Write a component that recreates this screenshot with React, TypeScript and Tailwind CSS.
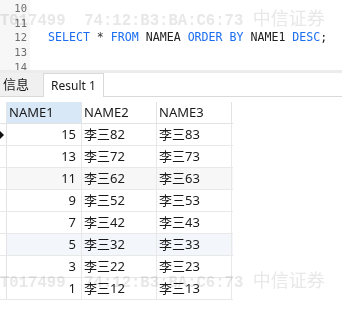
import React from 'react';

const rows = [
  { n: 15, a: '李三82', b: '李三83', bg: 'bg-white', mark: true },
  { n: 13, a: '李三72', b: '李三73', bg: 'bg-white' },
  { n: 11, a: '李三62', b: '李三63', bg: 'bg-[#f7f7f7]' },
  { n: 9, a: '李三52', b: '李三53', bg: 'bg-white' },
  { n: 7, a: '李三42', b: '李三43', bg: 'bg-white' },
  { n: 5, a: '李三32', b: '李三33', bg: 'bg-[#f3f7fc]' },
  { n: 3, a: '李三22', b: '李三23', bg: 'bg-white' },
  { n: 1, a: '李三12', b: '李三13', bg: 'bg-white' },
];

const Watermark: React.FC<{ top: string }> = ({ top }) => (
  <div
    className={`pointer-events-none absolute left-0 ${top} flex items-baseline whitespace-pre text-[#e8e8e8] mix-blend-multiply`}
  >
    <span className="font-['Liberation_Mono',monospace] text-[15.6px] font-bold">T017499  74:12:B3:BA:C6:73 </span>
    <span className="font-['Noto_Sans_CJK_SC',sans-serif] text-[18px]">中信证券</span>
  </div>
);

const App: React.FC = () => {
  return (
    <div className="relative w-[342px] h-[327px] overflow-hidden bg-white font-['Noto_Sans','Noto_Sans_CJK_SC',sans-serif] text-[#1a1a1a]">
      {/* editor */}
      <div className="flex h-[70px] overflow-hidden">
        <div className="w-[30px] bg-[#f7f7f7] pt-[1px] pr-[3px] text-right font-['DejaVu_Sans_Mono',monospace] text-[10.5px] leading-[14.7px] text-[#6e6e6e]">
          <div>10</div>
          <div>11</div>
          <div>12</div>
          <div>13</div>
          <div>14</div>
        </div>
        <div className="pt-[1px] pl-[18px] font-['DejaVu_Sans_Mono',monospace] text-[11.6px] leading-[14.7px] whitespace-pre">
          <div>&nbsp;</div>
          <div>&nbsp;</div>
          <div>
            <span className="text-[#1c6ef0]">SELECT</span>
            <span className="text-[#333]"> * </span>
            <span className="text-[#1c6ef0]">FROM</span>
            <span className="text-[#222]"> NAMEA </span>
            <span className="text-[#1c6ef0]">ORDER BY</span>
            <span className="text-[#222]"> NAME1 </span>
            <span className="text-[#1c6ef0]">DESC</span>
            <span className="text-[#222]">;</span>
          </div>
        </div>
      </div>

      <div className="h-[3px] bg-[#ececec]" />

      {/* tabs */}
      <div className="flex h-[24px] text-[12px]">
        <div className="flex w-[43px] items-center border-b border-[#d9d9d9] bg-[#f0f0f0] pl-[3px] text-[13px]">信息</div>
        <div className="flex w-[61px] items-center justify-center border-x border-t border-[#d9d9d9] bg-white">Result 1</div>
        <div className="flex-1 border-b border-[#d9d9d9]" />
      </div>

      {/* grid */}
      <div className="mt-[5px] w-[233px] text-[13px]">
        <div className="grid h-[22px] grid-cols-[7px_75px_75px_75px] border-b border-[#e3e3e3]">
          <div className="border-r border-[#e3e3e3]" />
          <div className="flex items-center border-r border-[#e3e3e3] bg-[#d9e8f7] pl-[2px]">NAME1</div>
          <div className="flex items-center border-r border-[#e3e3e3] pl-[2px]">NAME2</div>
          <div className="flex items-center border-r border-[#e3e3e3] pl-[2px]">NAME3</div>
        </div>
        {rows.map((r) => (
          <div key={r.n} className={`grid h-[22px] grid-cols-[7px_75px_75px_75px] border-b border-[#e8e8e8] ${r.bg}`}>
            <div className="flex items-center border-r border-[#e3e3e3] bg-white">
              {r.mark && (
                <svg width="5" height="8" viewBox="0 0 5 8">
                  <path d="M0 0 L4 4 L0 8 Z" fill="#111" />
                </svg>
              )}
            </div>
            <div className="flex items-center justify-end border-r border-[#e8e8e8] pr-[5px]">{r.n}</div>
            <div className="flex items-center border-r border-[#e8e8e8] pl-[2px]">{r.a}</div>
            <div className="flex items-center border-r border-[#e8e8e8] pl-[2px]">{r.b}</div>
          </div>
        ))}
      </div>

      <Watermark top="top-[4px]" />
      <Watermark top="top-[266px]" />
    </div>
  );
};

export default App;
